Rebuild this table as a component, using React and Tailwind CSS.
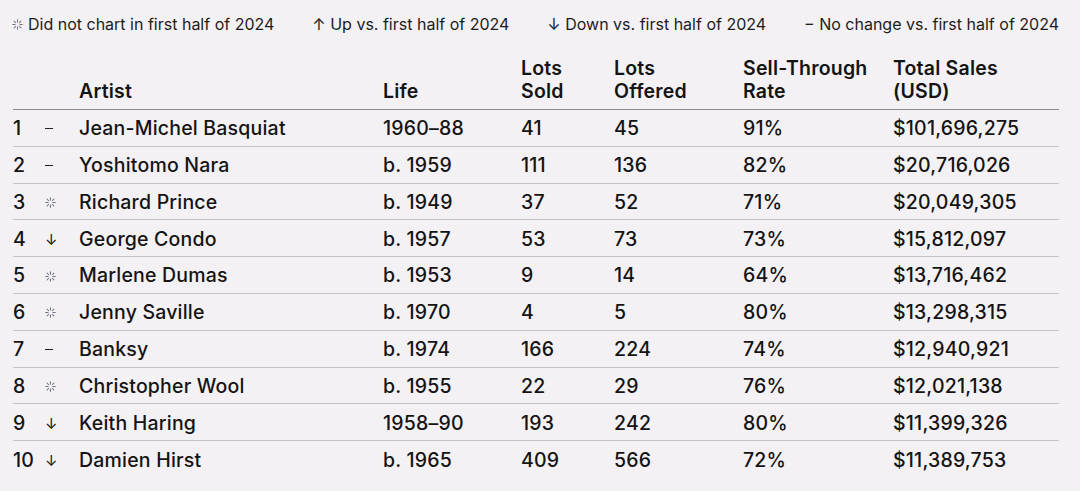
const rows = [
  [1, 'same', 'Jean-Michel Basquiat', '1960–88', '41', '45', '91%', '$101,696,275'],
  [2, 'same', 'Yoshitomo Nara', 'b. 1959', '111', '136', '82%', '$20,716,026'],
  [3, 'new', 'Richard Prince', 'b. 1949', '37', '52', '71%', '$20,049,305'],
  [4, 'down', 'George Condo', 'b. 1957', '53', '73', '73%', '$15,812,097'],
  [5, 'new', 'Marlene Dumas', 'b. 1953', '9', '14', '64%', '$13,716,462'],
  [6, 'new', 'Jenny Saville', 'b. 1970', '4', '5', '80%', '$13,298,315'],
  [7, 'same', 'Banksy', 'b. 1974', '166', '224', '74%', '$12,940,921'],
  [8, 'new', 'Christopher Wool', 'b. 1955', '22', '29', '76%', '$12,021,138'],
  [9, 'down', 'Keith Haring', '1958–90', '193', '242', '80%', '$11,399,326'],
  [10, 'down', 'Damien Hirst', 'b. 1965', '409', '566', '72%', '$11,389,753'],
];

const Spark = ({ className }) => (
  <svg viewBox="0 0 12 12" className={className} fill="none" stroke="currentColor" strokeWidth="1.1" strokeLinecap="round">
    <path d="M6 0.8v2.6M6 8.6v2.6M0.8 6h2.6M8.6 6h2.6M2.3 2.3l1.8 1.8M7.9 7.9l1.8 1.8M9.7 2.3L7.9 4.1M4.1 7.9L2.3 9.7" />
  </svg>
);

const Mark = ({ type }) => {
  if (type === 'new') return <Spark className="w-[11px] h-[11px] text-gray-500" />;
  if (type === 'down') return <span className="text-[15px] leading-none font-normal">↓</span>;
  return <span className="block w-[8px] h-px bg-[#222]" />;
};

const App = () => {
  return (
    <div className="w-[1080px] h-[491px] bg-[#f4f1f4] text-[#141414] overflow-hidden" style={{ fontFamily: 'Inter, "Liberation Sans", sans-serif' }}>
      <div className="flex items-center justify-between pl-[12px] pr-[21px] pt-[12px] h-[24px] text-[16px] text-[#1c1c1c] box-content">
        <span className="flex items-center gap-[5px]"><Spark className="w-[11px] h-[11px] text-gray-500" />Did not chart in first half of 2024</span>
        <span>↑ Up vs. first half of 2024</span>
        <span>↓ Down vs. first half of 2024</span>
        <span>− No change vs. first half of 2024</span>
      </div>
      <div className="mx-[13px] mt-[21px] w-[1046px]">
        <div className="grid grid-cols-[66px_304px_138px_93px_129px_150px_1fr] items-end border-b border-[#8c8a8c] pb-[6px] text-[19.5px] font-semibold leading-[23px] tracking-[0.2px]">
          <div></div>
          <div>Artist</div>
          <div>Life</div>
          <div>Lots<br />Sold</div>
          <div>Lots<br />Offered</div>
          <div>Sell-Through<br />Rate</div>
          <div>Total Sales<br />(USD)</div>
        </div>
        {rows.map(([n, t, name, life, sold, off, rate, total], i) => (
          <div
            key={n}
            className={`grid grid-cols-[32px_34px_304px_138px_93px_129px_150px_1fr] items-center h-[36.8px] pt-[2px] text-[19.5px] font-medium tracking-[0.2px] ${i < rows.length - 1 ? 'border-b border-[#c6c3c6]' : ''}`}
          >
            <div>{n}</div>
            <div className="flex items-center">
              <Mark type={t} />
            </div>
            <div>{name}</div>
            <div>{life}</div>
            <div>{sold}</div>
            <div>{off}</div>
            <div>{rate}</div>
            <div>{total}</div>
          </div>
        ))}
      </div>
    </div>
  );
};

export default App;
